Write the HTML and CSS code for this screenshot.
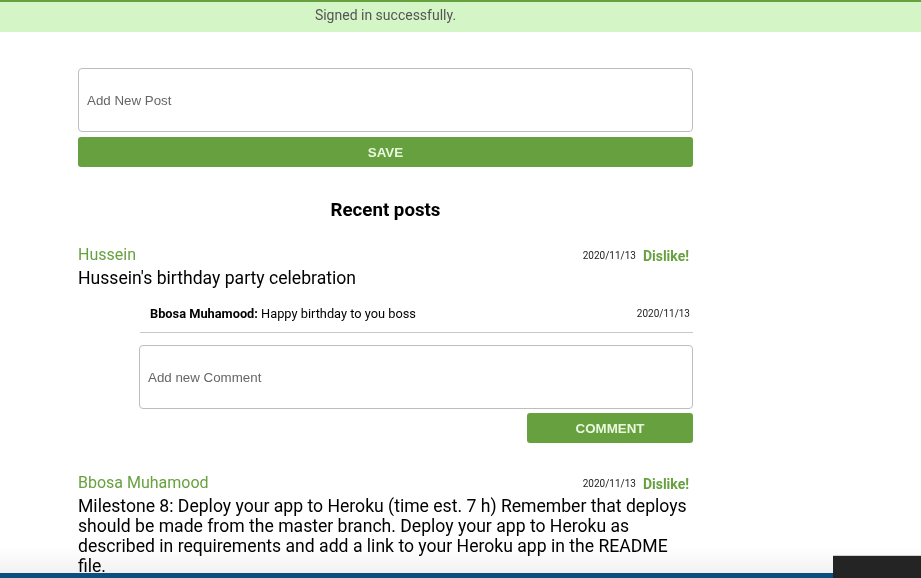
FILE: index.html
```html
<!DOCTYPE html>
<html lang="en">
<head>
<meta charset="utf-8">
<title>Posts</title>
<link rel="stylesheet" href="styles.css">
</head>
<body>
<div class="notice"><div class="notice-text">Signed in successfully.</div></div>
<main class="container">
  <form class="new-post">
    <textarea class="field post-field" placeholder="Add New Post"></textarea>
    <button type="button" class="btn btn-full">SAVE</button>
  </form>
  <h2 class="heading">Recent posts</h2>

  <article class="post">
    <div class="post-head">
      <span class="author">Hussein</span>
      <span class="meta"><span class="date">2020/11/13</span><a class="dislike">Dislike!</a></span>
    </div>
    <p class="post-body">Hussein's birthday party celebration</p>
    <div class="comments">
      <div class="comment">
        <span><b>Bbosa Muhamood:</b> Happy birthday to you boss</span>
        <span class="date">2020/11/13</span>
      </div>
      <textarea class="field comment-field" placeholder="Add new Comment"></textarea>
      <div class="actions"><button type="button" class="btn btn-comment">COMMENT</button></div>
    </div>
  </article>

  <article class="post post-second">
    <div class="post-head">
      <span class="author">Bbosa Muhamood</span>
      <span class="meta"><span class="date">2020/11/13</span><a class="dislike">Dislike!</a></span>
    </div>
    <p class="post-body">Milestone 8: Deploy your app to Heroku (time est. 7 h) Remember that deploys should be made from the master branch. Deploy your app to Heroku as described in requirements and add a link to your Heroku app in the README file.</p>
  </article>
</main>
<div class="fade"></div>
<div class="taskbar"></div>
<div class="dark-box"></div>
</body>
</html>
```

FILE: styles.css
```css
html { background: #fff; }
body {
  margin: 0;
  font-family: Roboto, "Liberation Sans", Arial, sans-serif;
  color: #000;
}
.notice {
  border-top: 2px solid #67a13f;
  background: #d4f6c7;
  height: 30px;
}
.notice-text {
  width: 615px;
  margin-left: 78px;
  line-height: 27px;
  text-align: center;
  font-size: 14px;
  color: #555;
}
.container {
  width: 615px;
  margin: 36px 0 0 78px;
}
.new-post { display: flex; flex-direction: column; gap: 5px; margin: 0; }
.field {
  display: block;
  box-sizing: border-box;
  width: 100%;
  height: 64px;
  border: 1px solid #bdbdbd;
  border-radius: 4px;
  padding: 24px 8px 0;
  font-family: "Liberation Sans", Arial, sans-serif;
  font-size: 13.33px;
  resize: none;
  margin: 0;
  background: #fff;
}
.field::placeholder { color: #666; }
.btn {
  height: 30px;
  border: 0;
  border-radius: 3px;
  background: #67a13f;
  color: #e9f7df;
  font-family: "Liberation Sans", Arial, sans-serif;
  font-weight: bold;
  font-size: 13.33px;
  padding: 0;
}
.btn-full { width: 100%; }
.heading {
  margin: 32px 0 0;
  text-align: center;
  font-size: 18.7px;
  line-height: 22px;
  font-weight: bold;
}
.post { margin-top: 23px; }
.post-head {
  display: flex;
  justify-content: space-between;
  align-items: center;
  height: 20px;
  padding-right: 4px;
}
.author { color: #67a13f; font-size: 16px; }
.meta { display: flex; align-items: center; gap: 7px; padding-top: 3px; }
.date { font-size: 10px; color: #222; }
.dislike { color: #67a13f; font-weight: bold; font-size: 14px; }
.post-body {
  margin: 4px 0 0;
  font-size: 17.6px;
  line-height: 20px;
}
.comments { margin-left: 61px; margin-top: 10px; }
.comment {
  display: flex;
  justify-content: space-between;
  align-items: center;
  margin-left: 1px;
  padding: 6px 3px 8px 10px;
  line-height: 20px;
  font-size: 12.8px;
  border-bottom: 1px solid #c8c8c8;
}
.comment .date { font-size: 10px; }
.comment-field { margin-top: 12px; }
.actions { display: flex; justify-content: flex-end; margin-top: 4px; }
.btn-comment { width: 166px; }
.post-second { margin-top: 29px; }
.fade {
  position: fixed;
  left: 0; right: 0; bottom: 5px;
  height: 26px;
  background: linear-gradient(#fff, #f2f2f2);
  z-index: -1;
}
.taskbar {
  position: fixed;
  left: 0; right: 0; bottom: 0;
  height: 5px;
  background: #0b4f80;
}
.dark-box {
  position: fixed;
  right: 0; bottom: 0;
  width: 88px;
  height: 22px;
  background: #242424;
  border-top: 1px solid #d0d0d0;
}
```
